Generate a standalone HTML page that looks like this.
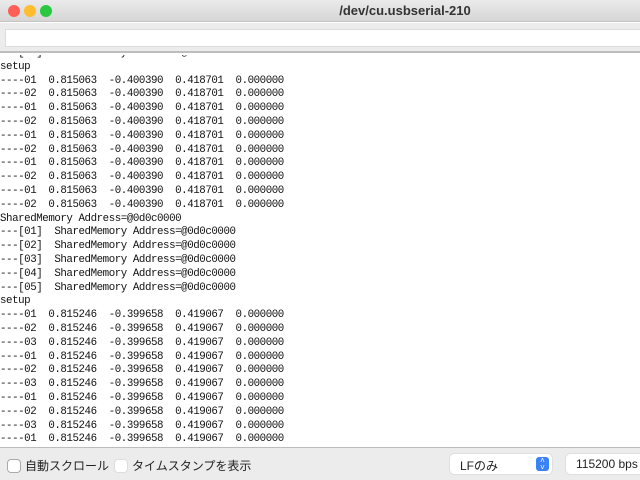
<!DOCTYPE html>
<html><head><meta charset="utf-8"><style>
*{margin:0;padding:0;box-sizing:border-box}
body{width:640px;height:480px;overflow:hidden;background:#fff;font-family:"Liberation Sans","Noto Sans CJK JP",sans-serif;position:relative}
#title{position:absolute;left:0;top:0;width:640px;height:22px;background:linear-gradient(#ebebeb,#d6d6d6);border-bottom:1px solid #c4c4c4}
.dot{position:absolute;top:5px;width:12px;height:12px;border-radius:50%}
#title .t{position:absolute;left:0;width:100%;top:3px;text-align:center;font-weight:bold;font-size:13px;color:#333;padding-left:170px}
#tool{position:absolute;top:23px;left:0;width:640px;height:30px;background:#ececec;border-bottom:2px solid #bdbdbd}
#field{position:absolute;left:5px;top:6px;right:0;height:18px;background:#fff;border:1px solid #dcdcdc;border-right:none}
#txt{position:absolute;top:55px;left:0;width:640px;height:392px;overflow:hidden}
pre{position:absolute;left:0;top:-8px;font-family:"Liberation Mono",monospace;font-size:10.8px;letter-spacing:-0.44px;line-height:13.8px;color:#111}
#bot{position:absolute;top:447px;left:0;width:640px;height:33px;background:#ececec;border-top:1px solid #bcbcbc;font-size:12px;color:#222}
.cb{position:absolute;top:11px;width:14px;height:14px;border-radius:4px;background:#fff;border:1px solid #aaa}
.lbl{position:absolute;top:9px}
.sel{position:absolute;top:6px;height:20px;background:#fff;border-radius:4px;box-shadow:0 0 1px #999;font-size:12px;padding:3px 0 0 10px}
</style></head><body>
<div id="title">
<div class="dot" style="left:8px;background:#fe5f57"></div>
<div class="dot" style="left:24px;background:#febc2e"></div>
<div class="dot" style="left:40px;background:#28c840"></div>
<div class="t">/dev/cu.usbserial-210</div>
</div>
<div id="tool"><div id="field"></div></div>
<div id="txt"><pre>---[05]  SharedMemory Address=@0d0c0000
setup
----01  0.815063  -0.400390  0.418701  0.000000
----02  0.815063  -0.400390  0.418701  0.000000
----01  0.815063  -0.400390  0.418701  0.000000
----02  0.815063  -0.400390  0.418701  0.000000
----01  0.815063  -0.400390  0.418701  0.000000
----02  0.815063  -0.400390  0.418701  0.000000
----01  0.815063  -0.400390  0.418701  0.000000
----02  0.815063  -0.400390  0.418701  0.000000
----01  0.815063  -0.400390  0.418701  0.000000
----02  0.815063  -0.400390  0.418701  0.000000
SharedMemory Address=@0d0c0000
---[01]  SharedMemory Address=@0d0c0000
---[02]  SharedMemory Address=@0d0c0000
---[03]  SharedMemory Address=@0d0c0000
---[04]  SharedMemory Address=@0d0c0000
---[05]  SharedMemory Address=@0d0c0000
setup
----01  0.815246  -0.399658  0.419067  0.000000
----02  0.815246  -0.399658  0.419067  0.000000
----03  0.815246  -0.399658  0.419067  0.000000
----01  0.815246  -0.399658  0.419067  0.000000
----02  0.815246  -0.399658  0.419067  0.000000
----03  0.815246  -0.399658  0.419067  0.000000
----01  0.815246  -0.399658  0.419067  0.000000
----02  0.815246  -0.399658  0.419067  0.000000
----03  0.815246  -0.399658  0.419067  0.000000
----01  0.815246  -0.399658  0.419067  0.000000
</pre></div>
<div id="bot">
<div class="cb" style="left:7px"></div><div class="lbl" style="left:25px">自動スクロール</div>
<div class="cb" style="left:114px;border-color:#ddd"></div><div class="lbl" style="left:132px">タイムスタンプを表示</div>
<div class="sel" style="left:450px;width:102px">LFのみ<div style="position:absolute;right:3px;top:3px;width:13px;height:14px;background:#3b82f6;border-radius:3px;color:#fff;font-size:8px;text-align:center;line-height:7px">˄<br>˅</div></div>
<div class="sel" style="left:566px;width:80px">115200 bps</div>
</div>
</body></html>
